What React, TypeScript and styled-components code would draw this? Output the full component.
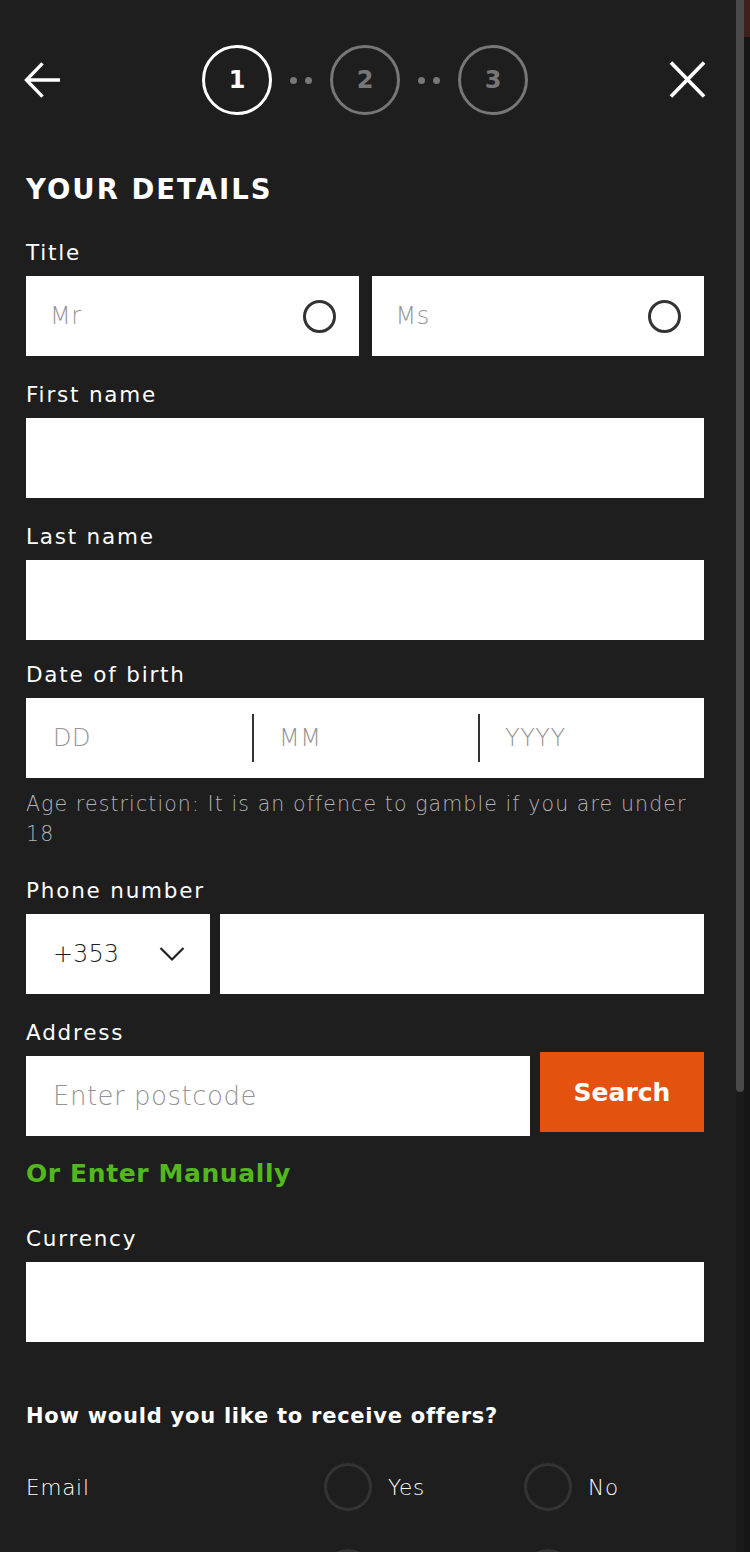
import React from "react";
import styled, { createGlobalStyle } from "styled-components";

const GlobalStyle = createGlobalStyle`
  html, body { margin: 0; padding: 0; background: #1e1e1e; }
  body { font-family: "DejaVu Sans", "Noto Sans", sans-serif; }
  * { box-sizing: border-box; }
`;

const Shell = styled.div`
  display: flex;
  width: 750px;
  height: 1552px;
  overflow: hidden;
  background: #1e1e1e;
`;

const Panel = styled.main`
  flex: 1;
  display: flex;
  flex-direction: column;
  padding: 0 32px 0 26px;
  color: #fff;
`;

const ScrollTrack = styled.div`
  width: 8px;
  background: #1a1a1a;
  display: flex;
  flex-direction: column;
`;

const ScrollThumb = styled.div`
  height: 1092px;
  background: #4a4a4a;
  border-radius: 0 0 4px 4px;
`;

const EdgeStrip = styled.div`
  width: 6px;
  background: #161616;
  display: flex;
  flex-direction: column;
`;

const EdgeAccent = styled.div`
  height: 37px;
  background: #3d2118;
`;

const Header = styled.header`
  height: 160px;
  flex: none;
  display: flex;
  align-items: center;
  justify-content: space-between;
  margin-left: -2px;
  margin-right: -2px;
`;

const IconButton = styled.button`
  width: 37px;
  height: 37px;
  padding: 0;
  border: 0;
  background: none;
  display: flex;
  align-items: center;
  justify-content: center;
  color: #fff;
  cursor: pointer;
`;

const Steps = styled.div`
  display: flex;
  align-items: center;
`;

const StepCircle = styled.div<{ $active?: boolean }>`
  width: 70px;
  height: 70px;
  border-radius: 50%;
  border: 3px solid ${(p) => (p.$active ? "#ffffff" : "#777777")};
  color: ${(p) => (p.$active ? "#ffffff" : "#777777")};
  display: flex;
  align-items: center;
  justify-content: center;
  font-weight: 700;
  font-size: 24px;
`;

const Dots = styled.div`
  display: flex;
  gap: 8px;
  margin: 0 18px;
`;

const Dot = styled.span`
  width: 7px;
  height: 7px;
  border-radius: 50%;
  background: #777;
`;

const Heading = styled.h1`
  margin: 12px 0 0;
  font-size: 27.5px;
  line-height: 34px;
  font-weight: 700;
  letter-spacing: 2px;
`;

const Field = styled.section<{ $gap: number }>`
  display: flex;
  flex-direction: column;
  flex: none;
  margin-top: ${(p) => p.$gap}px;
`;

const Label = styled.label`
  display: block;
  height: 26px;
  line-height: 26px;
  font-size: 21.5px;
  letter-spacing: 1.8px;
  margin-bottom: 10px;
  color: #fff;
`;

const Row = styled.div<{ $gap: number; $align?: string }>`
  display: flex;
  gap: ${(p) => p.$gap}px;
  align-items: ${(p) => p.$align || "stretch"};
`;

const Box = styled.div<{ $width?: number; $grow?: boolean }>`
  height: 80px;
  background: #fff;
  display: flex;
  align-items: center;
  flex: ${(p) => (p.$grow ? "1 1 0" : "none")};
  ${(p) => (p.$width ? `width: ${p.$width}px;` : "")}
`;

const ChoiceBox = styled(Box)`
  justify-content: space-between;
  padding: 0 23px 0 24px;
`;

const Placeholder = styled.span<{ $size?: number }>`
  font-size: ${(p) => p.$size || 24}px;
  font-weight: 200;
  color: #949494;
  letter-spacing: 0.5px;
`;

const SmallRadio = styled.span`
  width: 33px;
  height: 33px;
  border-radius: 50%;
  border: 3px solid #333;
`;

const DateCell = styled.div<{ $divider?: boolean }>`
  flex: 1;
  height: 100%;
  display: flex;
  align-items: center;
  padding-left: 27px;
  position: relative;
  ${(p) =>
    p.$divider
      ? `&::before { content: ""; position: absolute; left: 0; top: 16px; bottom: 16px; width: 2px; background: #333; }`
      : ""}
`;

const Hint = styled.p`
  margin: 11px 0 0;
  font-size: 20.5px;
  line-height: 30px;
  font-weight: 300;
  color: #b4b4b4;
  letter-spacing: 1.1px;
`;

const CodeBox = styled(Box)`
  padding: 0 25px 0 27px;
  justify-content: space-between;
  font-size: 24px;
  color: #1e1e1e;
  font-weight: 300;
`;

const PostcodeBox = styled(Box)`
  padding-left: 27px;
`;

const SearchButton = styled.button`
  width: 164px;
  height: 80px;
  flex: none;
  margin-top: -4px;
  border: 0;
  background: #e5520f;
  color: #fff;
  font-family: inherit;
  font-size: 25px;
  font-weight: 700;
  cursor: pointer;
`;

const ManualLink = styled.a`
  display: block;
  margin-top: 22px;
  font-size: 25px;
  line-height: 32px;
  font-weight: 700;
  color: #52b81e;
  text-decoration: none;
  letter-spacing: 0.6px;
`;

const SubHeading = styled.h2`
  margin: 60px 0 0;
  font-size: 21px;
  line-height: 28px;
  font-weight: 700;
  letter-spacing: 0.75px;
`;

const OfferRow = styled.div<{ $gap: number }>`
  display: grid;
  grid-template-columns: 298px 200px 1fr;
  align-items: center;
  height: 48px;
  flex: none;
  margin-top: ${(p) => p.$gap}px;
`;

const OfferLabel = styled.span`
  font-size: 21.5px;
  font-weight: 300;
  letter-spacing: 0.8px;
`;

const Option = styled.span`
  display: flex;
  align-items: center;
  gap: 16px;
  font-size: 21.5px;
  font-weight: 300;
  letter-spacing: 0.8px;
`;

const BigRadio = styled.span`
  width: 48px;
  height: 48px;
  border-radius: 50%;
  border: 3px solid #333;
  flex: none;
`;

const ArrowIcon = () => (
  <svg width="38" height="38" viewBox="0 0 38 38" fill="none" stroke="#fff" strokeWidth="3.4" strokeLinecap="butt">
    <path d="M37 19H3" />
    <path d="M19 2L2.5 19L19 36" />
  </svg>
);

const CloseIcon = () => (
  <svg width="38" height="38" viewBox="0 0 38 38" fill="none" stroke="#fff" strokeWidth="3.8">
    <path d="M2 1L36 36" />
    <path d="M36 1L2 36" />
  </svg>
);

const Chevron = () => (
  <svg width="26" height="16" viewBox="0 0 26 16" fill="none" stroke="#222" strokeWidth="2.2">
    <path d="M1.5 2L13 13.5L24.5 2" />
  </svg>
);

export default function App() {
  return (
    <>
      <GlobalStyle />
      <Shell>
        <Panel>
          <Header>
            <IconButton aria-label="Back">
              <ArrowIcon />
            </IconButton>
            <Steps>
              <StepCircle $active>1</StepCircle>
              <Dots>
                <Dot />
                <Dot />
              </Dots>
              <StepCircle>2</StepCircle>
              <Dots>
                <Dot />
                <Dot />
              </Dots>
              <StepCircle>3</StepCircle>
            </Steps>
            <IconButton aria-label="Close">
              <CloseIcon />
            </IconButton>
          </Header>

          <Heading>YOUR DETAILS</Heading>

          <Field $gap={34}>
            <Label>Title</Label>
            <Row $gap={13}>
              <ChoiceBox $grow>
                <Placeholder>Mr</Placeholder>
                <SmallRadio />
              </ChoiceBox>
              <ChoiceBox $grow>
                <Placeholder>Ms</Placeholder>
                <SmallRadio />
              </ChoiceBox>
            </Row>
          </Field>

          <Field $gap={26}>
            <Label>First name</Label>
            <Box />
          </Field>

          <Field $gap={26}>
            <Label>Last name</Label>
            <Box />
          </Field>

          <Field $gap={22}>
            <Label>Date of birth</Label>
            <Box>
              <DateCell>
                <Placeholder>DD</Placeholder>
              </DateCell>
              <DateCell $divider>
                <Placeholder>MM</Placeholder>
              </DateCell>
              <DateCell $divider>
                <Placeholder>YYYY</Placeholder>
              </DateCell>
            </Box>
            <Hint>Age restriction: It is an offence to gamble if you are under 18</Hint>
          </Field>

          <Field $gap={29}>
            <Label>Phone number</Label>
            <Row $gap={10}>
              <CodeBox $width={184}>
                <span>+353</span>
                <Chevron />
              </CodeBox>
              <Box $grow />
            </Row>
          </Field>

          <Field $gap={26}>
            <Label>Address</Label>
            <Row $gap={10} $align="flex-start">
              <PostcodeBox $grow>
                <Placeholder $size={26}>Enter postcode</Placeholder>
              </PostcodeBox>
              <SearchButton>Search</SearchButton>
            </Row>
            <ManualLink href="#">Or Enter Manually</ManualLink>
          </Field>

          <Field $gap={36}>
            <Label>Currency</Label>
            <Box />
          </Field>

          <SubHeading>How would you like to receive offers?</SubHeading>

          <OfferRow $gap={33}>
            <OfferLabel>Email</OfferLabel>
            <Option>
              <BigRadio />
              Yes
            </Option>
            <Option>
              <BigRadio />
              No
            </Option>
          </OfferRow>
          <OfferRow $gap={38}>
            <OfferLabel>SMS</OfferLabel>
            <Option>
              <BigRadio />
              Yes
            </Option>
            <Option>
              <BigRadio />
              No
            </Option>
          </OfferRow>
        </Panel>
        <ScrollTrack>
          <ScrollThumb />
        </ScrollTrack>
        <EdgeStrip>
          <EdgeAccent />
        </EdgeStrip>
      </Shell>
    </>
  );
}
